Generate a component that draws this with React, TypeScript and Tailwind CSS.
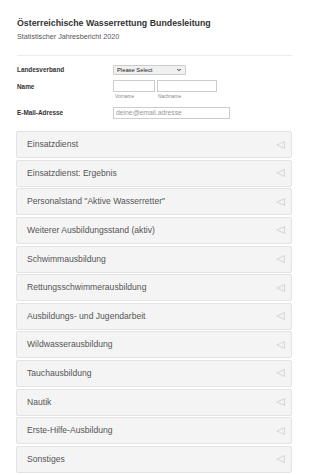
import { ChevronDown } from 'lucide-react';

const sections = [
  'Einsatzdienst',
  'Einsatzdienst: Ergebnis',
  'Personalstand "Aktive Wasserretter"',
  'Weiterer Ausbildungsstand (aktiv)',
  'Schwimmausbildung',
  'Rettungsschwimmerausbildung',
  'Ausbildungs- und Jugendarbeit',
  'Wildwasserausbildung',
  'Tauchausbildung',
  'Nautik',
  'Erste-Hilfe-Ausbildung',
  'Sonstiges',
];

function Arrow() {
  return (
    <svg width="9" height="8" viewBox="0 0 9 8" className="shrink-0">
      <path d="M8.5 0.5 L0.8 4 L8.5 7.5 Z" fill="#f2f2f2" stroke="#cfcfcf" strokeWidth="0.8" strokeLinejoin="round" />
    </svg>
  );
}

export default function App() {
  return (
    <div className="min-h-[475px] bg-white text-[#333] font-['Liberation_Sans',Arial,sans-serif]">
      <div className="pl-[17px] pr-[18px] pt-[18px]">
        {/* Header */}
        <h1 className="text-[8.8px] leading-[11px] font-bold text-[#333]">
          Österreichische Wasserrettung Bundesleitung
        </h1>
        <p className="mt-[3px] text-[7.2px] leading-[9px] text-[#555]">Statistischer Jahresbericht 2020</p>
        <div className="mt-[14px] h-px bg-[#ececec]" />

        {/* Form */}
        <div className="mt-[9px] flex flex-col">
          <div className="flex items-center h-[10px]">
            <label className="w-[96px] text-[6.4px] font-bold text-[#333]">Landesverband</label>
            <div className="flex h-[10px] w-[73px] items-center justify-between rounded-[1px] border border-[#ccc] bg-[#f0f0f0] px-[3px]">
              <span className="text-[5.8px] text-[#222]">Please Select</span>
              <ChevronDown className="h-[6px] w-[6px] text-[#333]" strokeWidth={4} />
            </div>
          </div>

          <div className="mt-[5px] flex">
            <label className="w-[96px] pt-[2px] text-[6.4px] font-bold text-[#333]">Name</label>
            <div className="flex gap-[2px]">
              <div className="flex flex-col">
                <div className="h-[12px] w-[42px] border border-[#ccc] bg-white" />
                <span className="mt-[1px] pl-[2px] text-[4.8px] text-[#888]">Vorname</span>
              </div>
              <div className="flex flex-col">
                <div className="h-[12px] w-[60px] border border-[#ccc] bg-white" />
                <span className="mt-[1px] pl-[1px] text-[4.8px] text-[#888]">Nachname</span>
              </div>
            </div>
          </div>

          <div className="mt-[7px] flex items-center">
            <label className="w-[96px] text-[6.4px] font-bold text-[#333]">E-Mail-Adresse</label>
            <div className="flex h-[12px] w-[117px] items-center border border-[#ccc] bg-white px-[2px]">
              <span className="text-[6.8px] text-[#999]">deine@email.adresse</span>
            </div>
          </div>
        </div>

        {/* Sections */}
        <div className="mt-[12px] -ml-[1px] flex w-[276px] flex-col gap-[1.6px]">
          {sections.map((s) => (
            <div
              key={s}
              className="flex h-[27px] items-center justify-between rounded-[2px] border border-[#e3e3e3] bg-[#f4f4f4] pl-[10px] pr-[6px]"
            >
              <span className="text-[8.6px] text-[#555]">{s}</span>
              <Arrow />
            </div>
          ))}
        </div>
      </div>
    </div>
  );
}
